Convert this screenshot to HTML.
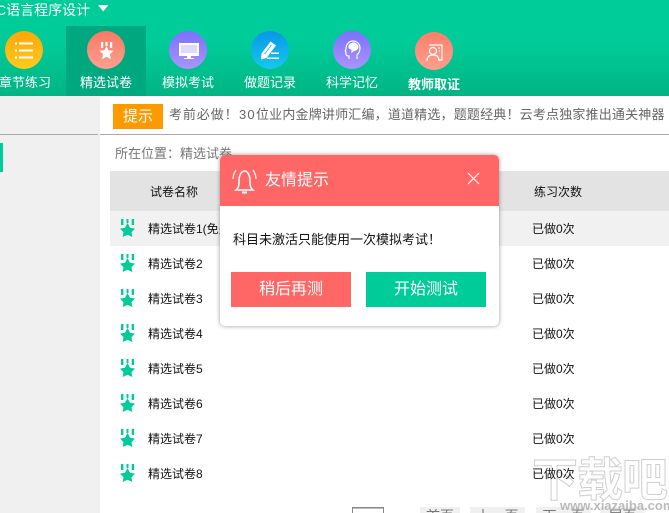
<!DOCTYPE html>
<html lang="zh"><head><meta charset="utf-8">
<style>
html,body{margin:0;padding:0}
body{width:669px;height:513px;overflow:hidden;position:relative;background:#fff;font-family:"Liberation Sans","Noto Sans CJK SC",sans-serif;color:#111}
.a{position:absolute;white-space:nowrap}
.hd{left:0;top:0;width:669px;height:96px;background:linear-gradient(#00cc99 0,#00cc99 45%,#00b484 100%)}
.act{left:66px;top:26px;width:80px;height:70px;background:#00a880}
.c{width:38px;height:38px;border-radius:50%}
.l{color:#fff;font-size:13px;line-height:16px;text-align:center;width:80px}
.row{left:148px;font-size:12px;line-height:16px;color:#111}
.d{left:532px;font-size:12px;line-height:16px;color:#111}
.p{font-family:"Liberation Sans","Noto Sans CJK TC",sans-serif}
.pg{top:507px;height:6px;background:#f0f0f0;color:#777;font-size:14px;line-height:18px;text-align:center;overflow:hidden}
</style></head><body>
<div class="a hd"></div>
<div class="a" style="left:-4px;top:1px;color:#fff;font-size:14px;line-height:18px">C语言程序设计</div>
<svg class="a" style="left:98px;top:5px" width="11" height="7"><path d="M0 0H10.500L5.200 6.500Z" fill="#fff"/></svg>
<div class="a act"></div>

<div class="a c" style="left:5px;top:31px;background:linear-gradient(#ffa50a,#ffcc1a)"></div>
<svg class="a" style="left:5px;top:31px" width="38" height="38" fill="#fff"><rect x="10" y="11.500" width="2" height="2"/><rect x="14" y="11.500" width="14" height="2"/><rect x="10" y="18.500" width="2" height="2"/><rect x="14" y="18.500" width="14" height="2"/><rect x="10" y="25.500" width="2" height="2"/><rect x="14" y="25.500" width="14" height="2"/></svg>
<div class="a l" style="left:-15px;top:75px">章节练习</div>

<div class="a c" style="left:87px;top:31px;background:linear-gradient(#f67a64,#ff9f90)"></div>
<svg class="a" style="left:87px;top:31px" width="38" height="38" fill="#fff"><rect x="14" y="11" width="2.200" height="6"/><rect x="18.400" y="11" width="2.200" height="4"/><rect x="23" y="11" width="2.200" height="6"/><path d="M19.500 15l2 4.200 5 .6-3.600 3.400 1 5-4.400-2.500-4.400 2.500 1-5-3.600-3.400 5-.6z"/></svg>
<div class="a l" style="left:66px;top:75px">精选试卷</div>

<div class="a c" style="left:169px;top:31px;background:linear-gradient(#7b70ff,#a994ff)"></div>
<svg class="a" style="left:169px;top:31px" width="38" height="38" fill="#fff"><path d="M10 12h20v13h-8v2h3v1H15v-1h3v-2h-8z"/><rect x="12" y="14" width="16" height="8" fill="#c9c0ff" opacity=".6"/></svg>
<div class="a l" style="left:148px;top:75px">模拟考试</div>

<div class="a c" style="left:251px;top:31px;background:linear-gradient(#0a96e8,#16c8ee)"></div>
<svg class="a" style="left:251px;top:31px" width="38" height="38" fill="#fff"><path d="M19.500 10.500l5.500 4-9.500 12.500-5.500 1.500 .5-6z"/><path d="M20.500 14l-7 9" stroke="#10b0ea" stroke-width=".8"/><rect x="20" y="21.500" width="8" height="1.500"/><rect x="16" y="26.500" width="12" height="1.500"/></svg>
<div class="a l" style="left:230px;top:75px">做题记录</div>

<div class="a c" style="left:333px;top:31px;background:linear-gradient(#7b70ff,#a994ff)"></div>
<svg class="a" style="left:333px;top:31px" width="38" height="38" fill="none" stroke="#fff" stroke-width="1.200"><path d="M16 28v-3c-2.500 0-3.500-1-3-4-1-.5-1-1 0-3 0-5 3-8 7-8s7 3 7 7c0 3-1 5-3 7v4"/><path d="M16 16c0-3 3-4 5-4s4 2 4 4-2 3-3 3-2 1-3 2v-3c-2 0-3-1-3-2z" fill="#fff"/></svg>
<div class="a l" style="left:312px;top:75px">科学记忆</div>

<div class="a c" style="left:415px;top:32px;background:linear-gradient(#ff7f6b,#ff9e8e)"></div>
<svg class="a" style="left:415px;top:32px" width="38" height="38" fill="none" stroke="#fff" stroke-width="1.200"><path d="M14 13h13v15h-3"/><circle cx="18" cy="19" r="3.500"/><path d="M12 29c0-4 2-6 6-6s6 2 6 6"/><path d="M23 16h2M24 19h1"/></svg>
<div class="a l" style="left:394px;top:77px;font-weight:bold">教师取证</div>

<div class="a" style="left:0;top:96px;width:100px;height:417px;background:#f0f0f0"></div>
<div class="a" style="left:0;top:134px;width:98px;height:1px;background:#aaa"></div>
<div class="a" style="left:100px;top:134px;width:569px;height:1px;background:#aaa"></div>
<div class="a" style="left:0;top:143px;width:3px;height:29px;background:#00cc99"></div>

<div class="a" style="left:113px;top:104px;width:50px;height:25px;background:#ff9900;color:#fff;font-size:15px;line-height:25px;text-align:center">提示</div>
<div class="a p" style="left:169px;top:106px;font-size:13px;line-height:18px;color:#666;letter-spacing:.9px">考前必做！</div>
<div class="a" style="left:239px;top:106px;font-size:13px;line-height:18px;color:#666;letter-spacing:1.2px">30</div>
<div class="a" style="left:256px;top:106px;font-size:13px;line-height:18px;color:#666;letter-spacing:.18px">位业内金牌讲师汇编<span class="p">，</span>道道精选<span class="p">，</span>题题经典<span class="p">！</span>云考点独家推出通关神器</div>
<div class="a" style="left:115px;top:145px;font-size:13px;line-height:18px;color:#777">所在位置<span class="p">：</span>精选试卷</div>

<div class="a" style="left:110px;top:171px;width:559px;height:40px;background:#e3e3e3"></div>
<div class="a" style="left:110px;top:211px;width:559px;height:35px;background:#f1f1f1"></div>
<div class="a row" style="left:150px;top:184px">试卷名称</div>
<div class="a row" style="left:534px;top:184px">练习次数</div>

<div class="a pg" style="left:420px;width:40px">首页</div>
<div class="a pg" style="left:470px;width:55px">上一页</div>
<div class="a pg" style="left:536px;width:55px">下一页</div>
<div class="a pg" style="left:600px;width:45px">尾页</div>
<div class="a" style="left:352px;top:507px;width:32px;height:6px;border:1px solid #888;border-bottom:0;box-sizing:border-box;box-shadow:inset 0 1px 0 #bbb"></div>

<div class="a" style="left:532px;top:454px;font-size:46px;line-height:52px;font-weight:bold;color:rgba(255,255,255,.5);-webkit-text-stroke:1px #cfcfcf;letter-spacing:-1px">下载吧</div>
<div class="a" style="left:560px;top:499px;font-size:13px;line-height:14px;font-weight:bold;color:rgba(170,170,170,.8)">www.xiazaiba.com</div>

<svg width="0" height="0" style="position:absolute"><defs><g id="m" fill="#00cc99"><rect x="1" y="0" width="2.400" height="6"/><rect x="6.500" y="0" width="2" height="4"/><rect x="11.700" y="0" width="2.400" height="6"/><path d="M7.500 4l2.500 4.700 5 .9-3.500 3.600.8 4.800-4.800-2.300-4.800 2.300.8-4.800L0 9.600l5-.9z"/></g></defs></svg>
<svg class="a" style="left:120px;top:219px" width="15" height="19"><use href="#m"/></svg>
<svg class="a" style="left:120px;top:254px" width="15" height="19"><use href="#m"/></svg>
<svg class="a" style="left:120px;top:289px" width="15" height="19"><use href="#m"/></svg>
<svg class="a" style="left:120px;top:324px" width="15" height="19"><use href="#m"/></svg>
<svg class="a" style="left:120px;top:359px" width="15" height="19"><use href="#m"/></svg>
<svg class="a" style="left:120px;top:394px" width="15" height="19"><use href="#m"/></svg>
<svg class="a" style="left:120px;top:429px" width="15" height="19"><use href="#m"/></svg>
<svg class="a" style="left:120px;top:464px" width="15" height="19"><use href="#m"/></svg>

<div class="a row" style="top:221px">精选试卷1(免费)</div><div class="a d" style="top:221px">已做0次</div>
<div class="a row" style="top:256px">精选试卷2</div><div class="a d" style="top:256px">已做0次</div>
<div class="a row" style="top:291px">精选试卷3</div><div class="a d" style="top:291px">已做0次</div>
<div class="a row" style="top:326px">精选试卷4</div><div class="a d" style="top:326px">已做0次</div>
<div class="a row" style="top:361px">精选试卷5</div><div class="a d" style="top:361px">已做0次</div>
<div class="a row" style="top:396px">精选试卷6</div><div class="a d" style="top:396px">已做0次</div>
<div class="a row" style="top:431px">精选试卷7</div><div class="a d" style="top:431px">已做0次</div>
<div class="a row" style="top:466px">精选试卷8</div><div class="a d" style="top:466px">已做0次</div>

<div class="a" style="left:220px;top:155px;width:279px;height:171px;background:#fff;border-radius:5px;box-shadow:0 0 4px rgba(60,70,70,.55)"></div>
<div class="a" style="left:220px;top:155px;width:279px;height:51px;background:#ff6666;border-radius:5px 5px 0 0"></div>
<svg class="a" style="left:231px;top:166px" width="27" height="28" fill="none" stroke="#fff" stroke-width="1.500"><path d="M5 24c2.500-2 3-4 3-9 0-6 2.500-10 5.500-10s5.500 4 5.500 10c0 5 .5 7 3 9z"/><path d="M11 26.500h5" stroke-width="2"/><path d="M2 13c0-3 1-6 3-9M25 13c0-3-1-6-3-9" stroke-width="1.200"/></svg>
<div class="a" style="left:265px;top:171px;color:#fff;font-size:16px;line-height:20px">友情提示</div>
<svg class="a" style="left:467px;top:172px" width="13" height="13" stroke="#fff" stroke-width="1.200"><path d="M1 1L12 12M12 1L1 12"/></svg>
<div class="a" style="left:233px;top:231px;font-size:13px;line-height:18px;color:#111">科目未激活只能使用一次模拟考试<span class="p">！</span></div>
<div class="a" style="left:231px;top:272px;width:120px;height:35px;background:#ff6666;color:#fff;font-size:16px;line-height:35px;text-align:center">稍后再测</div>
<div class="a" style="left:366px;top:272px;width:120px;height:35px;background:#00cc99;color:#fff;font-size:16px;line-height:35px;text-align:center">开始测试</div>
</body></html>
